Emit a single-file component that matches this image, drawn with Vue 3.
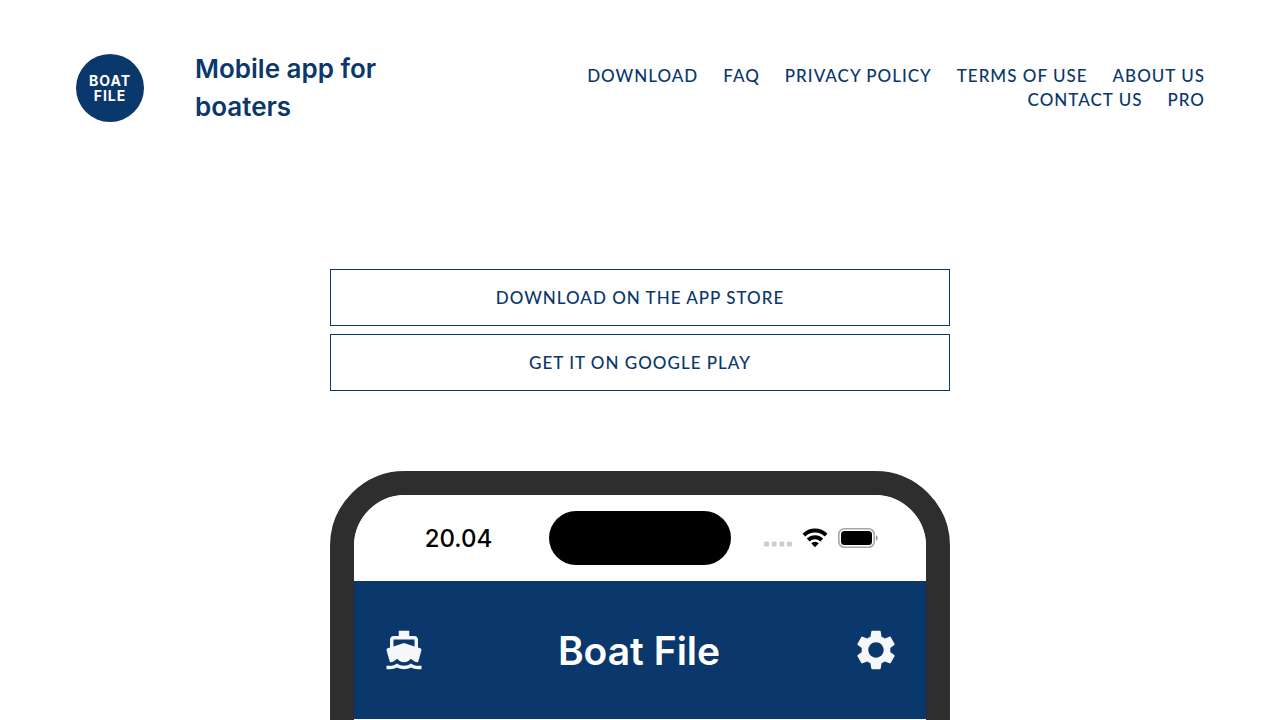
<script setup>
const links = [
  'Download',
  'FAQ',
  'Privacy Policy',
  'Terms of Use',
  'About us',
  'Contact us',
  'Pro',
]
const stores = ['Download on the App Store', 'Get it on Google Play']
</script>

<template>
  <div class="page">
    <header class="header">
      <div class="brand">
        <a class="logo" href="#" aria-label="Boat File home">
          <span>BOAT</span>
          <span>FILE</span>
        </a>
        <h1 class="title">Mobile app for boaters</h1>
      </div>
      <nav class="nav" aria-label="Main">
        <a v-for="link in links" :key="link" href="#">{{ link }}</a>
      </nav>
    </header>

    <main class="content">
      <div class="stores">
        <a v-for="store in stores" :key="store" class="store" href="#">{{ store }}</a>
      </div>

      <section class="phone" aria-label="App preview">
        <div class="screen">
          <div class="status">
            <div class="time">20.04</div>
            <div class="island"></div>
            <div class="signals">
              <svg class="dots" width="28" height="6" viewBox="0 0 28 6" fill="#ccc" aria-hidden="true">
                <rect x="0" y="0.500" width="5" height="5" rx="1.500" />
                <rect x="7.700" y="0.500" width="5" height="5" rx="1.500" />
                <rect x="15.400" y="0.500" width="5" height="5" rx="1.500" />
                <rect x="23" y="0.500" width="5" height="5" rx="1.500" />
              </svg>
              <svg class="wifi" width="26" height="20" viewBox="0 0 26 20" aria-hidden="true">
                <g fill="none" stroke="#000" stroke-width="3.900">
                  <path d="M1.900 7.100A15.600 15.600 0 0 1 24.100 7.100" />
                  <path d="M6.200 12A9.600 9.600 0 0 1 19.800 12" />
                </g>
                <path d="M9.200 15.300A5.300 5.300 0 0 1 16.800 15.300L13 19.200Z" />
              </svg>
              <svg class="battery" width="40" height="20" viewBox="0 0 40 20" aria-hidden="true">
                <rect x="0.800" y="0.800" width="35.400" height="18.400" rx="5.500" fill="#fff" stroke="#a6a6a6" stroke-width="1.600" />
                <rect x="3" y="3" width="31" height="14" rx="3.500" />
                <path d="M37.800 7.200Q39.800 8 39.800 10T37.800 12.800Z" fill="#999" />
              </svg>
            </div>
          </div>
          <div class="bar">
            <svg width="42" height="42" viewBox="0 0 24 24" fill="#f5f7fa" aria-hidden="true">
              <path d="M20 21c-1.390 0-2.780-.47-4-1.320-2.440 1.710-5.560 1.710-8 0C6.780 20.530 5.390 21 4 21H2v2h2c1.380 0 2.740-.35 4-.99 2.520 1.290 5.480 1.290 8 0 1.260.65 2.620.99 4 .99h2v-2h-2zM3.950 19H4c1.600 0 3.020-.88 4-2 .98 1.120 2.400 2 4 2s3.020-.88 4-2c.98 1.120 2.400 2 4 2h.05l1.890-6.680c.08-.26.06-.54-.06-.78s-.34-.42-.6-.5L20 10.620V6c0-1.100-.9-2-2-2h-3V1H9v3H6c-1.100 0-2 .9-2 2v4.620l-1.290.42c-.26.08-.48.26-.6.5s-.15.52-.06.780L3.950 19zM6 6h12v3.970L12 8 6 9.970V6z" />
            </svg>
            <h2 class="app-name">Boat File</h2>
            <svg width="46" height="46" viewBox="0 0 24 24" fill="#f5f7fa" aria-hidden="true">
              <path d="M19.430 12.980c.04-.32.07-.64.07-.98s-.03-.66-.07-.98l2.110-1.650c.19-.15.24-.42.12-.64l-2-3.460c-.12-.22-.39-.3-.61-.22l-2.490 1c-.52-.4-1.080-.73-1.690-.98l-.38-2.650C14.460 2.180 14.250 2 14 2h-4c-.25 0-.46.18-.49.42l-.38 2.650c-.61.25-1.170.59-1.690.98l-2.490-1c-.23-.09-.49 0-.61.22l-2 3.460c-.13.22-.07.49.12.64l2.110 1.650c-.04.32-.07.65-.07.98s.03.66.07.98l-2.110 1.650c-.19.15-.24.42-.12.64l2 3.460c.12.22.39.3.61.22l2.490-1c.52.4 1.080.73 1.690.98l.38 2.650c.03.24.24.42.49.42h4c.25 0 .46-.18.49-.42l.38-2.650c.61-.25 1.170-.59 1.690-.98l2.490 1c.23.09.49 0 .61-.22l2-3.460c.12-.22.07-.49-.12-.64l-2.110-1.650zM12 16c-2.210 0-4-1.790-4-4s1.790-4 4-4 4 1.790 4 4-1.790 4-4 4z" />
            </svg>
          </div>
        </div>
      </section>
    </main>
  </div>
</template>

<style>
body {
  margin: 0;
  background: #fff;
}
</style>

<style scoped>
.page {
  box-sizing: border-box;
  height: 100vh;
  overflow: hidden;
  color: #0a376c;
  font-family: Inter, "Liberation Sans", sans-serif;
}

.header {
  display: flex;
  align-items: center;
  justify-content: space-between;
  padding: 50px 75px 0 76px;
}

.brand {
  display: flex;
  align-items: center;
  gap: 51px;
}

.logo {
  display: flex;
  flex-direction: column;
  align-items: center;
  justify-content: center;
  flex-shrink: 0;
  width: 68px;
  height: 68px;
  border-radius: 50%;
  background: #0a376c;
  color: #fff;
  font-size: 14px;
  font-weight: 700;
  line-height: 15px;
  letter-spacing: 1px;
  text-decoration: none;
}

.title {
  max-width: 220px;
  margin: 0;
  font-size: 26px;
  font-weight: 600;
  line-height: 38px;
}

.nav {
  display: flex;
  flex-wrap: wrap;
  justify-content: flex-end;
  column-gap: 25px;
  max-width: 640px;
}

.nav a,
.store {
  color: inherit;
  font-family: Lato, "Liberation Sans", sans-serif;
  font-size: 17px;
  font-weight: 500;
  line-height: 24px;
  letter-spacing: 1px;
  text-decoration: none;
  text-transform: uppercase;
}

.content {
  max-width: 620px;
  margin: 143px auto 0;
}

.stores {
  display: grid;
  gap: 8px;
}

.store {
  padding: 16px;
  border: 1px solid #0a376c;
  text-align: center;
  line-height: 23px;
}

.phone {
  margin-top: 80px;
  border: 24px solid #2e2e2e;
  border-radius: 75px;
}

.screen {
  min-height: 1100px;
  border-radius: 51px;
  overflow: hidden;
  background: #fff;
}

.status {
  display: grid;
  grid-template-columns: 1fr 182px 1fr;
  align-items: center;
  height: 86px;
}

.time {
  padding-left: 14px;
  color: #000;
  font-size: 24px;
  font-weight: 500;
  text-align: center;
}

.island {
  height: 54px;
  border-radius: 27px;
  background: #000;
}

.signals {
  display: flex;
  align-items: center;
  padding-left: 33px;
}

.dots {
  margin-top: 12px;
}

.wifi {
  margin-left: 10px;
}

.battery {
  margin-left: 10px;
}

.bar {
  display: flex;
  align-items: center;
  justify-content: space-between;
  height: 138px;
  padding: 0 27px 0 29px;
  box-sizing: border-box;
  background: #0a376c;
}

.app-name {
  margin: 0;
  color: #fff;
  font-size: 39px;
  font-weight: 600;
}
</style>
